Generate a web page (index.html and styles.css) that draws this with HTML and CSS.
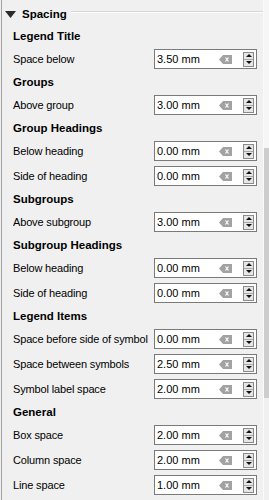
FILE: index.html
```html
<!DOCTYPE html>
<html>
<head>
<meta charset="utf-8">
<link rel="stylesheet" href="styles.css">
</head>
<body>
<div class="panel">
  <div class="content">
    <div class="group-head">
      <svg class="tri" width="11" height="7" viewBox="0 0 11 7"><path d="M0 0 H11 L5.5 7 Z" fill="#2b2b2b"/></svg>
      <span class="title">Spacing</span>
      <span class="rule"></span>
    </div>
    <div class="form">
      <div class="sec">Legend Title</div>
      <div class="lbl">Space below</div>
      <div class="spin"><span class="val">3.50 mm</span><svg class="clr" width="13" height="9" viewBox="0 0 13 9"><path d="M0 4.5 L4 0 H13 V9 H4 Z" fill="#a2a2a2"/><path d="M6.5 2.5 L9.5 6.5 M9.5 2.5 L6.5 6.5" stroke="#fff" stroke-width="1.2"/></svg><span class="btns"><span class="b up"></span><span class="b dn"></span></span></div>

      <div class="sec">Groups</div>
      <div class="lbl">Above group</div>
      <div class="spin"><span class="val">3.00 mm</span><svg class="clr" width="13" height="9" viewBox="0 0 13 9"><path d="M0 4.5 L4 0 H13 V9 H4 Z" fill="#a2a2a2"/><path d="M6.5 2.5 L9.5 6.5 M9.5 2.5 L6.5 6.5" stroke="#fff" stroke-width="1.2"/></svg><span class="btns"><span class="b up"></span><span class="b dn"></span></span></div>

      <div class="sec">Group Headings</div>
      <div class="lbl">Below heading</div>
      <div class="spin"><span class="val">0.00 mm</span><svg class="clr" width="13" height="9" viewBox="0 0 13 9"><path d="M0 4.5 L4 0 H13 V9 H4 Z" fill="#a2a2a2"/><path d="M6.5 2.5 L9.5 6.5 M9.5 2.5 L6.5 6.5" stroke="#fff" stroke-width="1.2"/></svg><span class="btns"><span class="b up"></span><span class="b dn"></span></span></div>
      <div class="lbl">Side of heading</div>
      <div class="spin"><span class="val">0.00 mm</span><svg class="clr" width="13" height="9" viewBox="0 0 13 9"><path d="M0 4.5 L4 0 H13 V9 H4 Z" fill="#a2a2a2"/><path d="M6.5 2.5 L9.5 6.5 M9.5 2.5 L6.5 6.5" stroke="#fff" stroke-width="1.2"/></svg><span class="btns"><span class="b up"></span><span class="b dn"></span></span></div>

      <div class="sec">Subgroups</div>
      <div class="lbl">Above subgroup</div>
      <div class="spin"><span class="val">3.00 mm</span><svg class="clr" width="13" height="9" viewBox="0 0 13 9"><path d="M0 4.5 L4 0 H13 V9 H4 Z" fill="#a2a2a2"/><path d="M6.5 2.5 L9.5 6.5 M9.5 2.5 L6.5 6.5" stroke="#fff" stroke-width="1.2"/></svg><span class="btns"><span class="b up"></span><span class="b dn"></span></span></div>

      <div class="sec">Subgroup Headings</div>
      <div class="lbl">Below heading</div>
      <div class="spin"><span class="val">0.00 mm</span><svg class="clr" width="13" height="9" viewBox="0 0 13 9"><path d="M0 4.5 L4 0 H13 V9 H4 Z" fill="#a2a2a2"/><path d="M6.5 2.5 L9.5 6.5 M9.5 2.5 L6.5 6.5" stroke="#fff" stroke-width="1.2"/></svg><span class="btns"><span class="b up"></span><span class="b dn"></span></span></div>
      <div class="lbl">Side of heading</div>
      <div class="spin"><span class="val">0.00 mm</span><svg class="clr" width="13" height="9" viewBox="0 0 13 9"><path d="M0 4.5 L4 0 H13 V9 H4 Z" fill="#a2a2a2"/><path d="M6.5 2.5 L9.5 6.5 M9.5 2.5 L6.5 6.5" stroke="#fff" stroke-width="1.2"/></svg><span class="btns"><span class="b up"></span><span class="b dn"></span></span></div>

      <div class="sec">Legend Items</div>
      <div class="lbl">Space before side of symbol</div>
      <div class="spin"><span class="val">0.00 mm</span><svg class="clr" width="13" height="9" viewBox="0 0 13 9"><path d="M0 4.5 L4 0 H13 V9 H4 Z" fill="#a2a2a2"/><path d="M6.5 2.5 L9.5 6.5 M9.5 2.5 L6.5 6.5" stroke="#fff" stroke-width="1.2"/></svg><span class="btns"><span class="b up"></span><span class="b dn"></span></span></div>
      <div class="lbl">Space between symbols</div>
      <div class="spin"><span class="val">2.50 mm</span><svg class="clr" width="13" height="9" viewBox="0 0 13 9"><path d="M0 4.5 L4 0 H13 V9 H4 Z" fill="#a2a2a2"/><path d="M6.5 2.5 L9.5 6.5 M9.5 2.5 L6.5 6.5" stroke="#fff" stroke-width="1.2"/></svg><span class="btns"><span class="b up"></span><span class="b dn"></span></span></div>
      <div class="lbl">Symbol label space</div>
      <div class="spin"><span class="val">2.00 mm</span><svg class="clr" width="13" height="9" viewBox="0 0 13 9"><path d="M0 4.5 L4 0 H13 V9 H4 Z" fill="#a2a2a2"/><path d="M6.5 2.5 L9.5 6.5 M9.5 2.5 L6.5 6.5" stroke="#fff" stroke-width="1.2"/></svg><span class="btns"><span class="b up"></span><span class="b dn"></span></span></div>

      <div class="sec">General</div>
      <div class="lbl">Box space</div>
      <div class="spin"><span class="val">2.00 mm</span><svg class="clr" width="13" height="9" viewBox="0 0 13 9"><path d="M0 4.5 L4 0 H13 V9 H4 Z" fill="#a2a2a2"/><path d="M6.5 2.5 L9.5 6.5 M9.5 2.5 L6.5 6.5" stroke="#fff" stroke-width="1.2"/></svg><span class="btns"><span class="b up"></span><span class="b dn"></span></span></div>
      <div class="lbl">Column space</div>
      <div class="spin"><span class="val">2.00 mm</span><svg class="clr" width="13" height="9" viewBox="0 0 13 9"><path d="M0 4.5 L4 0 H13 V9 H4 Z" fill="#a2a2a2"/><path d="M6.5 2.5 L9.5 6.5 M9.5 2.5 L6.5 6.5" stroke="#fff" stroke-width="1.2"/></svg><span class="btns"><span class="b up"></span><span class="b dn"></span></span></div>
      <div class="lbl">Line space</div>
      <div class="spin"><span class="val">1.00 mm</span><svg class="clr" width="13" height="9" viewBox="0 0 13 9"><path d="M0 4.5 L4 0 H13 V9 H4 Z" fill="#a2a2a2"/><path d="M6.5 2.5 L9.5 6.5 M9.5 2.5 L6.5 6.5" stroke="#fff" stroke-width="1.2"/></svg><span class="btns"><span class="b up"></span><span class="b dn"></span></span></div>
    </div>
  </div>
  <div class="scrollbar"><div class="track-top"></div><div class="thumb"></div></div>
</div>
</body>
</html>
```

FILE: styles.css
```css
html, body {
  margin: 0;
  padding: 0;
  background: #f0f0f0;
}
body {
  font-family: "Liberation Sans", Arial, sans-serif;
  font-size: 11px;
  color: #000;
  width: 269px;
  height: 500px;
  overflow: hidden;
}
.panel {
  display: flex;
  height: 500px;
  margin-left: 1px;
  border-left: 1px solid #a0a0a0;
}
.content {
  flex: 1;
  min-width: 0;
}
.group-head {
  display: flex;
  align-items: center;
  height: 16px;
  padding-top: 6px;
  padding-left: 3px;
}
.tri {
  flex: none;
  display: block;
}
.title {
  font-weight: bold;
  margin-left: 6px;
  font-size: 11.5px;
  line-height: 16px;
}
.rule {
  flex: 1;
  align-self: flex-start;
  margin-top: 5px;
  margin-left: 4px;
  border-top: 1px solid #d6d6d6;
  border-bottom: 1px solid #ffffff;
}
.form {
  display: grid;
  grid-template-columns: 141px 103px;
  row-gap: 5px;
  padding-left: 11px;
  margin-top: 6px;
}
.sec {
  grid-column: 1 / -1;
  height: 16px;
  line-height: 16px;
  font-weight: bold;
  font-size: 11.5px;
}
.lbl {
  height: 20px;
  line-height: 20px;
  white-space: nowrap;
  overflow: hidden;
  letter-spacing: -0.15px;
}
.spin {
  height: 20px;
  box-sizing: border-box;
  border: 1px solid #7a7a7a;
  background: #fff;
  display: flex;
  align-items: center;
  padding-left: 2px;
}
.val {
  flex: 1;
  line-height: 18px;
}
.clr {
  flex: none;
  display: block;
  margin-right: 11px;
}
.btns {
  flex: none;
  display: flex;
  flex-direction: column;
  width: 11px;
  height: 15px;
  border: 1px solid #8a8a8a;
  margin-right: 2px;
  background: #e6e6e6;
  box-sizing: border-box;
}
.b {
  flex: 1;
  display: flex;
  align-items: center;
  justify-content: center;
}
.up {
  border-bottom: 1px solid #a8a8a8;
}
.up::before {
  content: "";
  border-left: 3px solid transparent;
  border-right: 3px solid transparent;
  border-bottom: 3px solid #111;
}
.dn::before {
  content: "";
  border-left: 3px solid transparent;
  border-right: 3px solid transparent;
  border-top: 3px solid #111;
}
.scrollbar {
  flex: none;
  width: 5px;
  display: flex;
  flex-direction: column;
  background: #f0f0f0;
  border-left: 1px solid #fafafa;
}
.track-top {
  height: 148px;
  background: #f6f6f6;
}
.thumb {
  height: 250px;
  background: #cdcdcd;
}
```
